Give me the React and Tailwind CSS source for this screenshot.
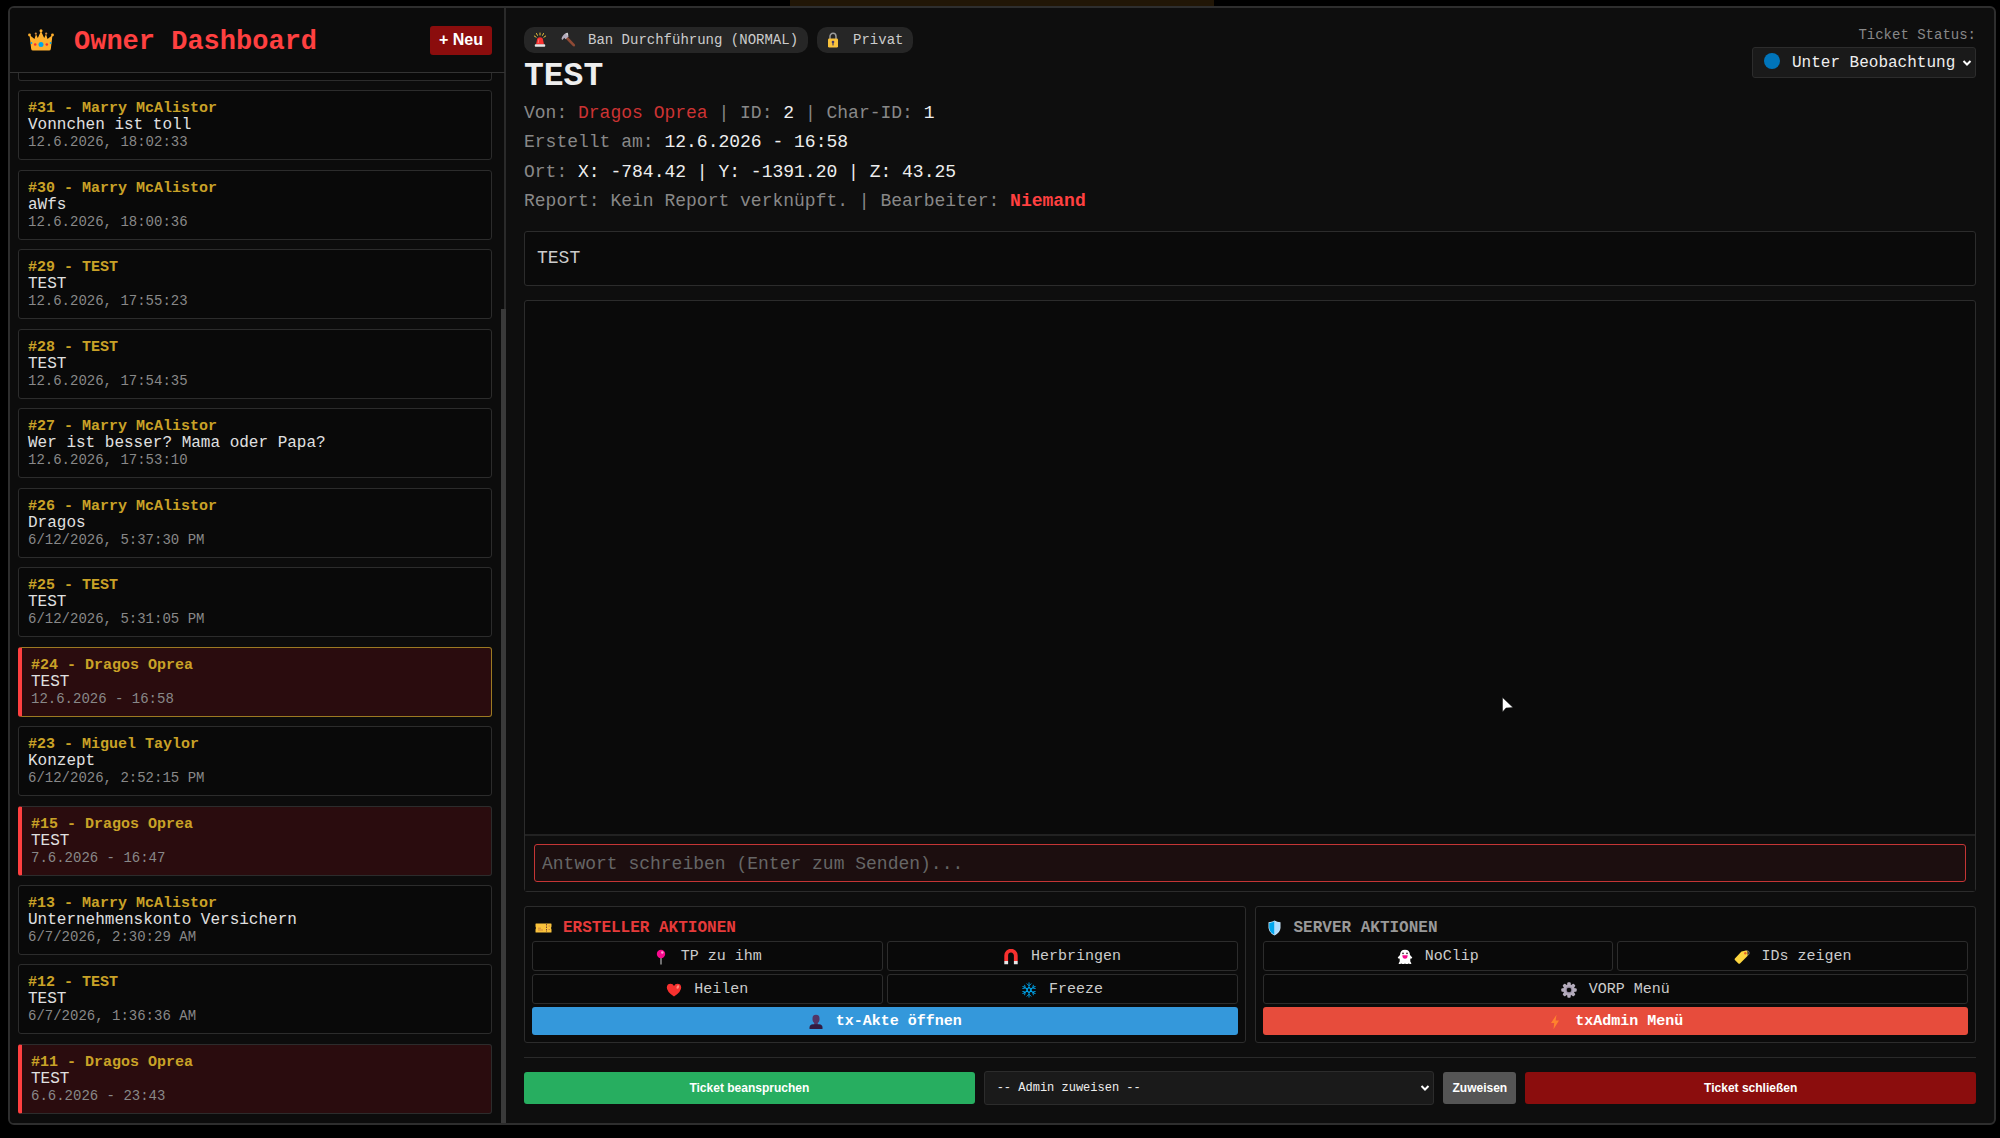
import React from "react";

const MONO = "font-['Liberation_Mono',monospace]";
const SANS = "font-['Liberation_Sans',sans-serif]";

const tickets = [
  { id: 31, name: "Marry McAlistor", title: "Vonnchen ist toll", date: "12.6.2026, 18:02:33" },
  { id: 30, name: "Marry McAlistor", title: "aWfs", date: "12.6.2026, 18:00:36" },
  { id: 29, name: "TEST", title: "TEST", date: "12.6.2026, 17:55:23" },
  { id: 28, name: "TEST", title: "TEST", date: "12.6.2026, 17:54:35" },
  { id: 27, name: "Marry McAlistor", title: "Wer ist besser? Mama oder Papa?", date: "12.6.2026, 17:53:10" },
  { id: 26, name: "Marry McAlistor", title: "Dragos", date: "6/12/2026, 5:37:30 PM" },
  { id: 25, name: "TEST", title: "TEST", date: "6/12/2026, 5:31:05 PM" },
  { id: 24, name: "Dragos Oprea", title: "TEST", date: "12.6.2026 - 16:58", ban: true, active: true },
  { id: 23, name: "Miguel Taylor", title: "Konzept", date: "6/12/2026, 2:52:15 PM" },
  { id: 15, name: "Dragos Oprea", title: "TEST", date: "7.6.2026 - 16:47", ban: true },
  { id: 13, name: "Marry McAlistor", title: "Unternehmenskonto Versichern", date: "6/7/2026, 2:30:29 AM" },
  { id: 12, name: "TEST", title: "TEST", date: "6/7/2026, 1:36:36 AM" },
  { id: 11, name: "Dragos Oprea", title: "TEST", date: "6.6.2026 - 23:43", ban: true },
];

function Svg({ box = "0 0 16 16", className = "size-4", children }) {
  return (
    <svg viewBox={box} className={`shrink-0 ${className}`} aria-hidden="true">
      {children}
    </svg>
  );
}

const Crown = () => (
  <Svg box="0 0 26 22" className="h-[22px] w-[26px]">
    <path d="M1.500 6 L6.500 10 L8 5 L9.800 9 L13 2 L16.200 9 L18 5 L19.500 10 L24.500 6 L22.800 20 Q22.600 21.500 21 21.500 H5 Q3.400 21.500 3.200 20 Z" fill="#ffb02e" />
    <circle cx="13" cy="1.800" r="1.500" fill="#ffb02e" />
    <circle cx="1.500" cy="6" r="1.400" fill="#ffb02e" />
    <circle cx="24.500" cy="6" r="1.400" fill="#ffb02e" />
    <circle cx="7.800" cy="4.600" r="1.100" fill="#d3883e" />
    <circle cx="18.200" cy="4.600" r="1.100" fill="#d3883e" />
    <circle cx="13" cy="15.500" r="2.500" fill="#00a6ed" />
    <circle cx="7.200" cy="15.500" r="1.300" fill="#f8312f" />
    <circle cx="18.800" cy="15.500" r="1.300" fill="#f8312f" />
    <circle cx="3.400" cy="14" r="0.900" fill="#00a6ed" />
    <circle cx="22.600" cy="14" r="0.900" fill="#00a6ed" />
  </Svg>
);

const Siren = () => (
  <Svg>
    <path d="M8 1v2M4.500 1.500l0.900 1.800M11.500 1.500l-0.900 1.800M2.300 4l1.800 1.200M13.700 4l-1.800 1.200" stroke="#fcd53f" strokeWidth="0.900" strokeLinecap="round" fill="none" />
    <path d="M4 12.500 L5.200 6.800 Q5.500 5.200 8 5.200 Q10.500 5.200 10.800 6.800 L12 12.500Z" fill="#f8312f" />
    <path d="M6.200 11 L6.800 7.300" stroke="#ff8687" strokeWidth="0.800" />
    <rect x="2.800" y="12.200" width="10.400" height="2.600" rx="0.800" fill="#e6e6e6" />
  </Svg>
);

const Hammer = () => (
  <Svg>
    <path d="M6.500 5.500 L13.800 13.200" stroke="#8f4a35" strokeWidth="2.600" strokeLinecap="round" />
    <path d="M1.500 7 Q2 3.500 6 1 L7.500 1.500 L8 3 L8.600 4.500 L5.500 7.300 L4.200 5.800 L2.500 8Z" fill="#b4acbc" />
    <path d="M6 1 L7.800 0.800 L8.300 3.300 L7 3.500Z" fill="#d3d3d3" />
  </Svg>
);

const Lock = () => (
  <Svg>
    <path d="M5 8 V4.500 a3 3.200 0 0 1 6 0 V8" fill="none" stroke="#9b9b9b" strokeWidth="1.500" />
    <rect x="3" y="6.500" width="10" height="9" rx="1.200" fill="#f9c23c" />
    <circle cx="8" cy="10" r="1.300" fill="#433b6b" />
    <path d="M8 10v3" stroke="#433b6b" strokeWidth="1.200" strokeLinecap="round" />
  </Svg>
);

const Ticket = () => (
  <Svg box="0 0 17 10" className="h-[10px] w-[17px]">
    <path d="M1 0.500 H16 Q16.500 0.500 16.500 1 V3.500 Q15.500 5 16.500 6.500 V9 Q16.500 9.500 16 9.500 H1 Q0.500 9.500 0.500 9 V6.500 Q1.500 5 0.500 3.500 V1 Q0.500 0.500 1 0.500Z" fill="#f9c23c" />
    <path d="M11.500 1v8" stroke="#7d4533" strokeWidth="1" strokeDasharray="1.500 1" />
    <path d="M3 5.200h3M3 7h5M13.500 3h1.500M13.500 6.500h1.500" stroke="#d3883e" strokeWidth="1" />
  </Svg>
);

const Shield = () => (
  <Svg box="0 0 14 16" className="h-4 w-[17px]">
    <path d="M7 0.500 Q9.500 2 13 2.200 V8 Q12.500 13 7 15.500 Q1.500 13 1 8 V2.200 Q4.500 2 7 0.500Z" fill="#c8e4f7" />
    <path d="M7 1.200 V14.700 Q2.200 12.400 1.700 8 V2.900 Q5 2.600 7 1.200Z" fill="#00a6ed" />
    <path d="M7 1.200 V14.700 Q11.800 12.400 12.300 8 V2.900 Q9 2.600 7 1.200Z" fill="#aeddff" />
  </Svg>
);

const Pin = () => (
  <Svg>
    <path d="M8 8v7" stroke="#9b9b9b" strokeWidth="1.400" strokeLinecap="round" />
    <circle cx="8" cy="5" r="4.200" fill="#f70a8d" />
    <circle cx="9.300" cy="3.500" r="1.200" fill="#ff9bd2" />
  </Svg>
);

const Magnet = () => (
  <Svg>
    <path d="M3.200 12 V6.500 a4.800 4.800 0 0 1 9.600 0 V12" fill="none" stroke="#f8312f" strokeWidth="3.800" />
    <path d="M1.300 12h3.800v3.200H1.300zM10.900 12h3.800v3.200h-3.800z" fill="#e6e6e6" />
  </Svg>
);

const Heart = () => (
  <Svg>
    <path d="M8 14.500 Q0.500 9.500 0.800 5.200 Q1.200 1.800 4.500 1.800 Q7 1.800 8 4 Q9 1.800 11.500 1.800 Q14.800 1.800 15.200 5.200 Q15.500 9.500 8 14.500Z" fill="#f8312f" />
    <ellipse cx="11.800" cy="5" rx="1.200" ry="1.900" transform="rotate(25 11.800 5)" fill="#ff8a7a" />
  </Svg>
);

const Snow = () => (
  <Svg>
    <g stroke="#00a6ed" strokeWidth="0.900" strokeLinecap="round" fill="none">
      {[0, 60, 120, 180, 240, 300].map((a) => (
        <path key={a} transform={`rotate(${a} 8 8)`} d="M8 6.500V0.800M6 1.800L8 3.800l2-2M7 6.300L8 5l1 1.300" />
      ))}
    </g>
  </Svg>
);

const Ghost = () => (
  <Svg>
    <path d="M3 6 Q3.200 0.800 8 0.800 Q12.800 0.800 13 6 L15.300 8.500 Q14.800 10 13.300 9.500 V12.500 L14.500 14.500 Q13 15.600 11.500 14.600 Q9.800 15.600 8 14.600 Q6.200 15.600 4.500 14.600 Q3 15.600 1.500 14.500 L2.700 12.500 V9.500 Q1.200 10 0.700 8.500Z" fill="#ffffff" />
    <circle cx="6" cy="4.300" r="0.900" fill="#402a32" />
    <circle cx="10" cy="4.300" r="0.900" fill="#402a32" />
    <path d="M5.300 6.300h5.400Q10.500 9.800 8 9.800T5.300 6.300Z" fill="#f70a8d" />
  </Svg>
);

const Tag = () => (
  <Svg>
    <circle cx="13" cy="4" r="2.200" fill="none" stroke="#7d7d7d" strokeWidth="1" />
    <path d="M7.500 2.500 L12 1.500 Q13.500 1.500 13.500 3 L13.500 7 L6 14.500 Q5.200 15.200 4.400 14.500 L0.900 11 Q0.200 10.200 0.900 9.400Z" fill="#fcd53f" />
    <circle cx="11.300" cy="4.300" r="1.200" fill="#e8622c" />
  </Svg>
);

const Gear = () => (
  <Svg>
    <g fill="#b4acbc">
      {[0, 45, 90, 135].map((a) => (
        <rect key={a} x="6.300" y="0.300" width="3.400" height="15.400" rx="1" transform={`rotate(${a} 8 8)`} />
      ))}
      <circle cx="8" cy="8" r="5.800" />
    </g>
    <circle cx="8" cy="8" r="3.400" fill="#998ea4" />
    <circle cx="8" cy="8" r="2.300" fill="#0a0a0a" />
  </Svg>
);

const Person = () => (
  <Svg>
    <path d="M4.500 4.500 Q4.500 0.800 8 0.800 T11.500 4.500 V6 Q11.200 8 9.800 9 V11 H6.200 V9 Q4.800 8 4.500 6Z" fill="#533566" />
    <path d="M1.500 15 V13.500 Q1.500 10.500 5 10.300 H11 Q14.500 10.500 14.500 13.500 V15Z" fill="#321b41" />
  </Svg>
);

const Bolt = () => (
  <Svg>
    <path d="M9.500 0.800 L4 9 H7.200 L6.500 15.200 L12 6.500 H8.600Z" fill="#ff822d" />
  </Svg>
);

const Chevron = ({ className }) => (
  <svg viewBox="0 0 10 6" className={`pointer-events-none absolute top-1/2 h-[6px] w-[10px] -translate-y-1/2 ${className}`} aria-hidden="true">
    <path d="M1.500 1 L5 4.500 L8.500 1" fill="none" stroke="#ffffff" strokeWidth="2" />
  </svg>
);

function TicketCard({ ticket }) {
  const { id, name, title, date, ban, active } = ticket;
  return (
    <button
      type="button"
      className={`block h-[70px] w-full shrink-0 rounded-[3px] border px-[9px] py-[9px] text-left ${
        ban ? "border-l-4 bg-[#2a0c0e] border-l-[#ff4040] " : "bg-[#090909] border-l-[#2c2c2c] "
      }${active ? "border-y-[#9c7a22] border-r-[#9c7a22]" : "border-y-[#2c2c2c] border-r-[#2c2c2c]"}`}
    >
      <span className="block text-[15px] leading-[17px] font-bold text-[#c9a227]">
        #{id} - {name}
      </span>
      <span className="block text-base leading-[17px] text-[#e0e0e0]">{title}</span>
      <span className="block text-sm leading-4 text-[#888888]">{date}</span>
    </button>
  );
}

function Sidebar() {
  return (
    <aside className="flex w-[496px] shrink-0 border-r-2 border-[#2a2a2a] bg-[#0c0c0c]">
      <div className="flex min-w-0 flex-1 flex-col">
        <header className="-mr-1 flex h-[65px] items-center border-b border-[#333333] pr-[13px] pl-[18px]">
          <Crown />
          <h1 className="ml-5 pt-1 text-[27px] font-bold text-[#ff4040]">Owner Dashboard</h1>
          <button type="button" className={`ml-auto h-[29px] rounded-[3px] bg-[#8b0d0d] px-[9px] text-base font-bold text-white ${SANS}`}>
            + Neu
          </button>
        </header>
        <nav aria-label="Tickets" className="flex flex-1 flex-col justify-between pr-[9px] pb-[9px] pl-2">
          <div className="h-2 rounded-b-[3px] border border-t-0 border-[#2c2c2c] bg-[#090909]" />
          {tickets.map((t) => (
            <TicketCard key={t.id} ticket={t} />
          ))}
        </nav>
      </div>
      <div className="-mr-0.5 flex w-[5px] flex-col justify-end">
        <div className="h-[73%] bg-[#3a3a3a]" />
      </div>
    </aside>
  );
}

function Badge({ children }) {
  return <span className="flex h-[26px] items-center rounded-[10px] bg-[#262626] pr-2.5 pl-2 text-sm text-[#cccccc]">{children}</span>;
}

function ActionButton({ icon, wide, children }) {
  return (
    <button
      type="button"
      className={`flex h-[30px] items-center justify-center gap-3 rounded-[3px] border border-[#2c2c2c] bg-[#090909] pt-0.5 text-[15px] text-[#cccccc] ${wide ? "col-span-2" : ""}`}
    >
      {icon}
      {children}
    </button>
  );
}

function ActionPanel({ icon, title, titleClass, children }) {
  return (
    <section className="flex-1 rounded-[3px] border border-[#2c2c2c] bg-[#0b0b0b] px-[7px] pt-2 pb-[7px]">
      <h3 className={`flex h-[26px] items-center gap-[11px] pl-[3px] text-base font-bold ${titleClass}`}>
        {icon}
        {title}
      </h3>
      <div className="grid grid-cols-2 gap-x-1 gap-y-[3px]">{children}</div>
    </section>
  );
}

function TicketHeader() {
  return (
    <div className="flex justify-between">
      <div>
        <div className="flex gap-[9px]">
          <Badge>
            <Siren />
            <span className="ml-3"><Hammer /></span>
            <span className="ml-3">Ban Durchführung (NORMAL)</span>
          </Badge>
          <Badge>
            <Lock />
            <span className="ml-3">Privat</span>
          </Badge>
        </div>
        <h2 className="mt-1 text-[33px] leading-10 font-bold text-[#eeeeee]">TEST</h2>
        <div className="mt-px grid h-[118px] items-center text-lg leading-7 text-[#888888]">
          <p>
            Von: <a href="#player" className="text-[#cc3333]">Dragos Oprea</a> | ID: <span className="text-[#eeeeee]">2</span> | Char-ID:{" "}
            <span className="text-[#eeeeee]">1</span>
          </p>
          <p>
            Erstellt am: <span className="text-[#eeeeee]">12.6.2026 - 16:58</span>
          </p>
          <p>
            Ort: <span className="text-[#eeeeee]">X: -784.42 | Y: -1391.20 | Z: 43.25</span>
          </p>
          <p>
            Report: Kein Report verknüpft. | Bearbeiter: <strong className="text-[#ff4040]">Niemand</strong>
          </p>
        </div>
      </div>
      <div className="flex flex-col items-end">
        <label htmlFor="status" className="text-sm leading-4 text-[#888888]">
          Ticket Status:
        </label>
        <div className="relative mt-1 w-56">
          <select id="status" className="h-[31px] w-full appearance-none rounded-[3px] border border-[#2c2c2c] bg-[#1a1a1a] pl-[39px] text-base text-[#eeeeee]">
            <option>Unter Beobachtung</option>
          </select>
          <span className="pointer-events-none absolute top-1.5 left-3 size-4 rounded-full bg-[#0074ba]" />
          <Chevron className="right-1" />
        </div>
      </div>
    </div>
  );
}

export default function App() {
  return (
    <div className={`relative flex min-h-screen bg-black pt-1.5 pr-1 pb-[13px] pl-2 ${MONO}`}>
      <div className="absolute top-0 left-[790px] h-1.5 w-[424px] bg-[#211606]" />
      <div className="flex flex-1 overflow-hidden rounded-md border-2 border-[#2e2e2e] bg-[#0e0e0e]">
        <Sidebar />
        <main className="flex min-w-0 flex-1 flex-col px-[18px] pt-[19px] pb-[18px]">
          <TicketHeader />
          <div className="mt-[15px] rounded-[3px] border border-[#2c2c2c] bg-[#0a0a0a] px-3 pt-3 pb-[13px] text-lg leading-7 text-[#cccccc]">TEST</div>
          <section className="mt-3.5 flex flex-1 flex-col rounded-[3px] border border-[#2c2c2c] bg-[#0a0a0a]">
            <div className="flex-1" />
            <div className="border-t-2 border-[#222222] bg-[#0e0e0e] px-[9px] pt-2 pb-[9px]">
              <input
                type="text"
                aria-label="Antwort schreiben"
                placeholder="Antwort schreiben (Enter zum Senden)..."
                className="block h-[38px] w-full rounded-[3px] border border-[#c53535] bg-[#1c0e0f] px-[7px] pt-0.5 text-lg text-[#eeeeee] placeholder:text-[#666666]"
              />
            </div>
          </section>
          <div className="mt-3.5 flex gap-[9px]">
            <ActionPanel icon={<Ticket />} title="ERSTELLER AKTIONEN" titleClass="text-[#e63a3a]">
              <ActionButton icon={<Pin />}>TP zu ihm</ActionButton>
              <ActionButton icon={<Magnet />}>Herbringen</ActionButton>
              <ActionButton icon={<Heart />}>Heilen</ActionButton>
              <ActionButton icon={<Snow />}>Freeze</ActionButton>
              <button type="button" className="col-span-2 flex h-7 items-center justify-center gap-3 rounded-[3px] bg-[#3498db] pt-0.5 text-[15px] font-bold text-white">
                <Person />
                tx-Akte öffnen
              </button>
            </ActionPanel>
            <ActionPanel icon={<Shield />} title="SERVER AKTIONEN" titleClass="text-[#999999]">
              <ActionButton icon={<Ghost />}>NoClip</ActionButton>
              <ActionButton icon={<Tag />}>IDs zeigen</ActionButton>
              <ActionButton wide icon={<Gear />}>VORP Menü</ActionButton>
              <button type="button" className="col-span-2 flex h-7 items-center justify-center gap-3 rounded-[3px] bg-[#e74c3c] pt-0.5 text-[15px] font-bold text-white">
                <Bolt />
                txAdmin Menü
              </button>
            </ActionPanel>
          </div>
          <footer className={`mt-3.5 flex items-center gap-[9px] border-t border-[#2a2a2a] pt-[13px] text-xs font-bold text-white ${SANS}`}>
            <button type="button" className="h-8 flex-1 rounded-[3px] bg-[#27ae60]">
              Ticket beanspruchen
            </button>
            <div className="relative flex-1">
              <select aria-label="Admin zuweisen" className={`block h-[34px] w-full appearance-none rounded-[3px] border border-[#2c2c2c] bg-[#1a1a1a] pl-3 text-xs font-normal text-[#eeeeee] ${MONO}`}>
                <option>-- Admin zuweisen --</option>
              </select>
              <Chevron className="right-1" />
            </div>
            <button type="button" className="h-8 w-[73px] rounded-[3px] bg-[#555555]">
              Zuweisen
            </button>
            <button type="button" className="h-8 flex-1 rounded-[3px] bg-[#8b0d0d]">
              Ticket schließen
            </button>
          </footer>
        </main>
      </div>
      <svg viewBox="0 0 12 16" className="pointer-events-none absolute top-[697px] left-[1502px] h-4 w-3" aria-hidden="true">
        <path d="M0.500 0.500 V15 L4 11 L11 10.500 Z" fill="#ffffff" stroke="#111111" strokeWidth="0.500" />
      </svg>
    </div>
  );
}
